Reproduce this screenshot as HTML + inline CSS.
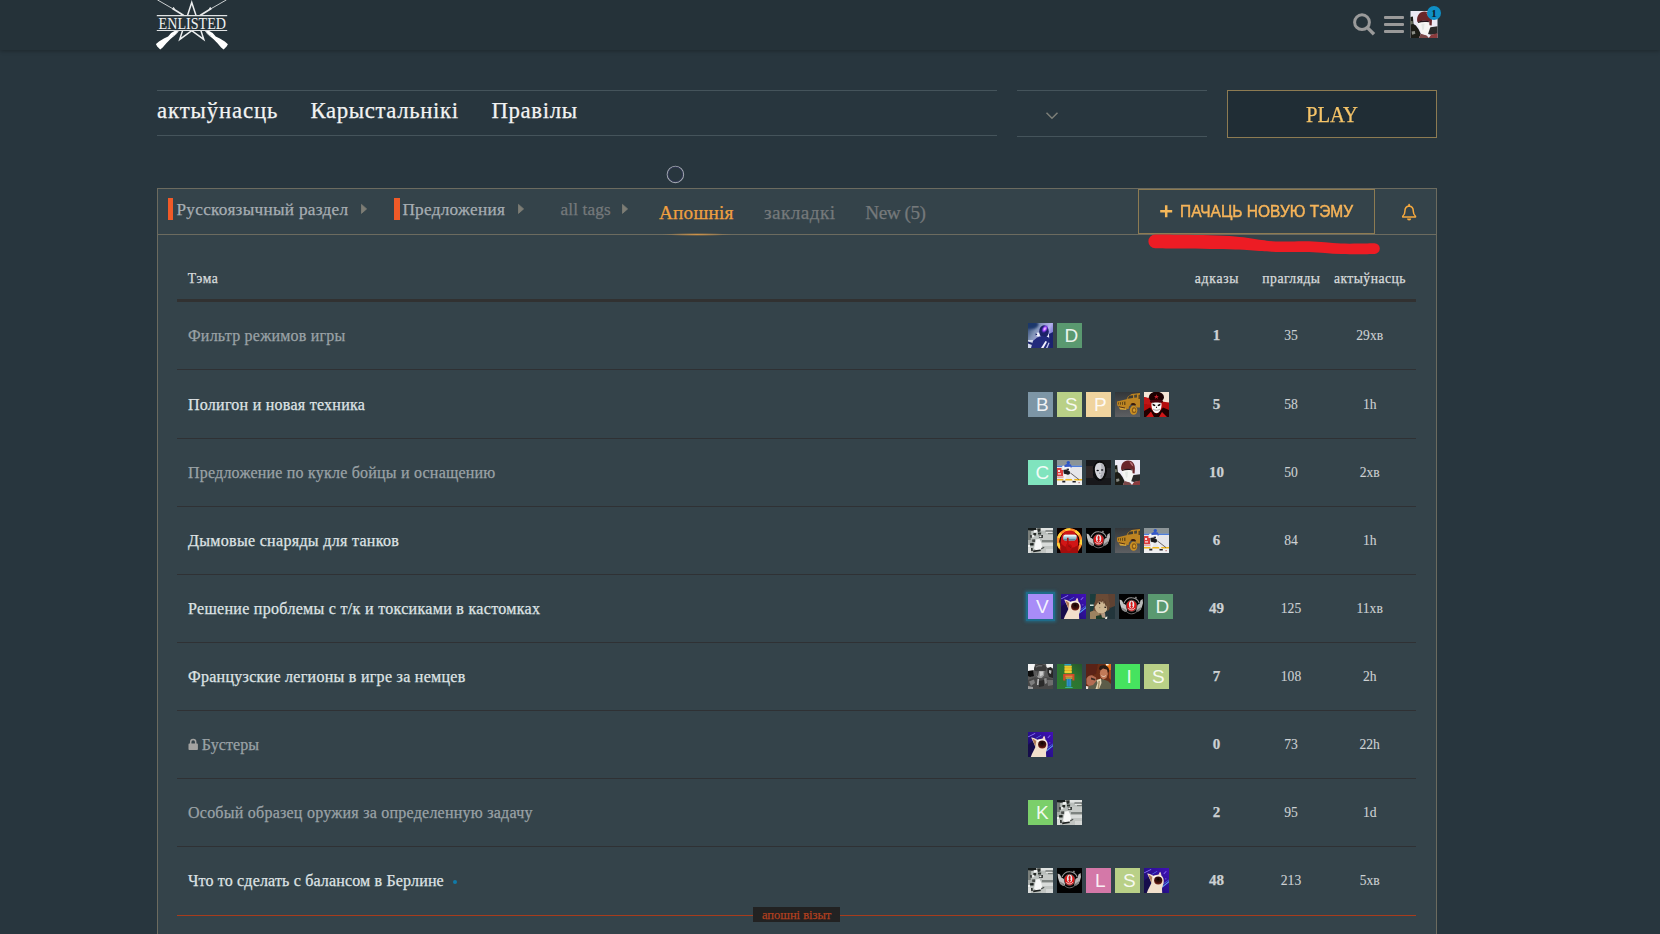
<!DOCTYPE html>
<html lang="be">
<head>
<meta charset="utf-8">
<title>Enlisted forum</title>
<style>
html,body{margin:0;padding:0;}
body{width:1660px;height:934px;overflow:hidden;background:#28363e;position:relative;font-family:"Liberation Serif",serif;}
.abs{position:absolute;}
.t{position:absolute;white-space:nowrap;transform-origin:0 50%;-webkit-text-stroke:0.25px currentColor;}
#hdr{left:0;top:0;width:1660px;height:50px;background:#253239;box-shadow:0 1px 4px rgba(0,0,0,.28);}
.hl{height:1px;background:#45545b;}
#play{left:1227px;top:90px;width:208px;height:46px;border:1px solid #8d7b52;background:#202d35;}
#panel{left:157px;top:188px;width:1278px;height:760px;border:1px solid #6c6b5f;background:#34434a;}
#tbline{left:158px;top:234px;width:1278px;height:1px;background:#6c6b5f;}
#newbtn{left:1138px;top:189px;width:235px;height:43px;border:1px solid #8d7b52;}
.ob{width:5px;height:22px;background:#f05a28;top:198px;}
.sep{left:177px;width:1239px;height:1px;background:#2f3134;}
.av{position:absolute;width:25px;height:25px;overflow:hidden;}
.la{position:absolute;width:25px;height:25px;text-indent:3.5px;overflow:hidden;color:rgba(255,255,255,.9);font:19px/25px "Liberation Sans",sans-serif;text-align:center;}
</style>
</head>
<body>
<div id="hdr" class="abs"></div>
<svg class="abs" style="left:156px;top:0" width="73" height="50" viewBox="0 0 73 50">
<defs><clipPath id="lc"><path d="M0 0 H73 V15 H0 Z M0 31 H73 V50 H0 Z"/></clipPath></defs>
<g clip-path="url(#lc)"><polygon points="35.75,2.40 40.35,16.56 55.25,16.57 43.20,25.32 47.80,39.48 35.75,30.73 23.70,39.48 28.30,25.32 16.25,16.57 31.15,16.56" fill="none" stroke="#eceeef" stroke-width="1.5" stroke-linejoin="miter"/>
<g id="rf"><path d="M1.3 -0.2 L17.6 9.2" stroke="#dfe2e3" stroke-width="0.9" fill="none"/><path d="M16.5 8.6 L27.8 15.4" stroke="#e8eaeb" stroke-width="1.7" fill="none"/><path d="M17.3 7.2 L18.6 9.6" stroke="#e8eaeb" stroke-width="1.1" fill="none"/><path d="M48.8 30.5 L52.3 30.5 L53.7 31.2 L56.7 33 L59.7 36.4 L63.9 38.4 L68.8 41.4 L71.9 44.2 L70.6 46.4 L67.6 49.4 L65.1 47.5 L61.5 43.3 L57.3 39 L53.7 36 L50.1 32.4 Z" fill="#ffffff"/><path d="M49.8 31.2 C51.5 34.5 53.5 36.3 55 36" stroke="#b8bdc0" stroke-width="0.8" fill="none"/></g>
<use href="#rf" transform="translate(71.8,0) scale(-1,1)"/></g>
<path d="M0.8 15.6 H71.2 M0.8 30.5 H71.2" stroke="#dfe2e3" stroke-width="1.1" fill="none"/>
<text x="2.6" y="28.5" font-family="Liberation Serif" font-size="16.3" fill="#f1f2f2" textLength="67.4" lengthAdjust="spacingAndGlyphs">ENLISTED</text>
</svg>
<svg class="abs" style="left:1350px;top:10px" width="30" height="30" viewBox="0 0 30 30"><circle cx="12" cy="12.2" r="7.4" fill="none" stroke="#9a9a9a" stroke-width="3"/><path d="M17.6 17.9 L24 24.3" stroke="#9a9a9a" stroke-width="3.4" stroke-linecap="butt"/></svg>
<div class="abs" style="left:1384px;top:16px;width:20px;height:3px;border-radius:1px;background:#9a9a9a"></div>
<div class="abs" style="left:1384px;top:23px;width:20px;height:3px;border-radius:1px;background:#9a9a9a"></div>
<div class="abs" style="left:1384px;top:30px;width:20px;height:3px;border-radius:1px;background:#9a9a9a"></div>
<svg class="abs" style="left:1410px;top:11px" width="28" height="27" viewBox="0 0 28 27"><use href="#a-helm" /></svg>
<div class="abs" style="left:1427px;top:6px;width:14px;height:14px;border-radius:7px;background:#0f8fc6"></div>
<span class="abs" style="left:1427px;top:6px;width:14px;text-align:center;font:bold 11px/14px 'Liberation Serif',serif;color:#0e1c2a">1</span>

<!-- nav -->
<div class="abs hl" style="left:157px;top:90px;width:840px"></div>
<div class="abs hl" style="left:157px;top:135px;width:840px"></div>
<div class="abs hl" style="left:1017px;top:90px;width:190px"></div>
<div class="abs hl" style="left:1017px;top:136px;width:190px"></div>
<svg class="abs" style="left:1044px;top:110px" width="16" height="12" viewBox="0 0 16 12"><path d="M2.5 2.8 L8 8.2 L13.5 2.8" fill="none" stroke="#7d7f78" stroke-width="1.5"/></svg>
<div id="play" class="abs"></div>
<svg class="abs" style="left:664px;top:163px" width="24" height="24" viewBox="0 0 24 24"><circle cx="11.4" cy="11.4" r="8.2" fill="none" stroke="#a2a8b0" stroke-width="1.1"/><circle cx="11.4" cy="11.4" r="7.3" fill="none" stroke="#35375c" stroke-width="0.9" opacity="0.85"/></svg>
<!-- panel -->
<div id="panel" class="abs"></div>
<div id="tbline" class="abs"></div>
<div id="newbtn" class="abs"></div>
<div class="abs ob" style="left:168px"></div>
<div class="abs ob" style="left:394px;width:6px"></div>
<svg class="abs" style="left:360px;top:203px" width="8" height="12" viewBox="0 0 8 12"><path d="M1.5 1.4 L6.6 5.9 L1.5 10.4 Z" fill="#7d7d75" stroke="#7d7d75" stroke-width="0.8" stroke-linejoin="round"/></svg>
<svg class="abs" style="left:517px;top:203px" width="8" height="12" viewBox="0 0 8 12"><path d="M1.5 1.4 L6.6 5.9 L1.5 10.4 Z" fill="#7d7d75" stroke="#7d7d75" stroke-width="0.8" stroke-linejoin="round"/></svg>
<svg class="abs" style="left:621px;top:203px" width="8" height="12" viewBox="0 0 8 12"><path d="M1.5 1.4 L6.6 5.9 L1.5 10.4 Z" fill="#7d7d75" stroke="#7d7d75" stroke-width="0.8" stroke-linejoin="round"/></svg>
<svg class="abs" style="left:1159px;top:204px" width="15" height="15" viewBox="0 0 15 15"><path d="M7.2 1.3 V13.3 M1.2 7.3 H13.2" fill="none" stroke="#f5b85a" stroke-width="2.5"/></svg>
<svg class="abs" style="left:1400px;top:202.6px" width="18" height="19" viewBox="0 0 18 19"><path d="M9.1 2.9 C6 3.2 4.9 5.6 4.9 8.2 C4.9 10.8 4.1 12.1 2.7 13.3 L2.7 14 H15.5 L15.5 13.3 C14.1 12.1 13.3 10.8 13.3 8.2 C13.3 5.6 12.2 3.2 9.1 2.9 Z" fill="none" stroke="#f6a93e" stroke-width="1.5" stroke-linejoin="round"/><path d="M7 15.4 a2.1 2 0 0 0 4.2 0 Z" fill="#f6a93e"/><path d="M9.1 1.7 V3" stroke="#f6a93e" stroke-width="1.7" stroke-linecap="round"/></svg>
<div class="abs" style="left:662px;top:233px;width:70px;height:3px;background:radial-gradient(ellipse at center, rgba(240,160,64,.75) 0%, rgba(240,160,64,0) 70%)"></div>
<svg class="abs" style="left:1140px;top:230px" width="250" height="30" viewBox="0 0 250 30"><path d="M15.2 4.6 C19.3 4.6 30.9 4.7 40.0 4.8 C49.1 4.9 60.8 5.0 70.0 5.3 C79.2 5.6 88.3 5.9 95.0 6.4 C101.7 6.9 105.5 7.6 110.0 8.2 C114.5 8.8 118.3 9.6 122.0 10.1 C125.7 10.6 127.3 11.0 132.0 11.2 C136.7 11.4 143.8 11.5 150.0 11.5 C156.2 11.5 163.2 11.2 169.0 11.3 C174.8 11.4 179.7 11.9 185.0 12.3 C190.3 12.7 195.5 13.3 201.0 13.5 C206.5 13.7 212.4 13.6 218.0 13.6 C223.6 13.6 231.8 13.3 234.5 13.3 A5.3 5.3 0 0 1 234.5 23.9 L234.5 23.9 C231.8 23.9 223.6 24.2 218.0 24.2 C212.4 24.2 206.5 24.3 201.0 24.1 C195.5 23.9 190.3 23.3 185.0 22.9 C179.7 22.5 174.8 22.0 169.0 21.9 C163.2 21.8 156.2 22.1 150.0 22.1 C143.8 22.1 136.7 22.0 132.0 21.8 C127.3 21.6 125.7 21.4 122.0 21.1 C118.3 20.8 114.5 20.4 110.0 20.2 C105.5 19.9 101.7 19.8 95.0 19.6 C88.3 19.4 79.2 19.3 70.0 19.1 C60.8 18.9 49.1 18.7 40.0 18.6 C30.9 18.4 19.3 18.3 15.2 18.2 A6.8 6.8 0 0 1 15.2 4.6 Z" fill="#ed1c24"/></svg>
<svg class="abs" style="left:188px;top:738px" width="11" height="13" viewBox="0 0 11 13"><path d="M1.3 5.6 H9.1 A0.8 0.8 0 0 1 9.9 6.4 V11.2 A0.8 0.8 0 0 1 9.1 12 H1.3 A0.8 0.8 0 0 1 0.5 11.2 V6.4 A0.8 0.8 0 0 1 1.3 5.6 Z" fill="#a3a3a1"/><path d="M2.7 6 V4 A2.5 2.5 0 0 1 7.7 4 V6" fill="none" stroke="#a3a3a1" stroke-width="1.5"/></svg>
<div class="abs" style="left:453px;top:880px;width:4px;height:4px;border-radius:2px;background:#0f7aa8"></div>

<div class="abs" style="left:177px;top:299px;width:1239px;height:3px;background:#313131"></div>
<div class="abs sep" style="top:369px"></div>
<div class="abs sep" style="top:438px"></div>
<div class="abs sep" style="top:506px"></div>
<div class="abs sep" style="top:574px"></div>
<div class="abs sep" style="top:642px"></div>
<div class="abs sep" style="top:710px"></div>
<div class="abs sep" style="top:778px"></div>
<div class="abs sep" style="top:846px"></div>
<div class="abs" style="left:177px;top:915px;width:1239px;height:1px;background:#a83c1c"></div>
<div class="abs" style="left:753px;top:907px;width:87px;height:15px;background:#222"></div>

<svg width="0" height="0" style="position:absolute">
<defs>
<filter id="b3" x="-10%" y="-10%" width="120%" height="120%"><feGaussianBlur stdDeviation="0.35"/></filter>
<filter id="b6" x="-10%" y="-10%" width="120%" height="120%"><feGaussianBlur stdDeviation="0.7"/></filter>
<filter id="b12" x="-20%" y="-20%" width="140%" height="140%"><feGaussianBlur stdDeviation="1.3"/></filter>
<linearGradient id="gp1" x1="0" y1="0" x2="1" y2="0.6"><stop offset="0" stop-color="#1d3766"/><stop offset="0.35" stop-color="#7f92b4"/><stop offset="0.7" stop-color="#b4b0ee"/><stop offset="1" stop-color="#5a58c8"/></linearGradient>
<radialGradient id="gp2" cx="0.5" cy="0.5" r="0.5"><stop offset="0" stop-color="#ffe8ff"/><stop offset="0.45" stop-color="#b050ff"/><stop offset="1" stop-color="#4a20e0" stop-opacity="0"/></radialGradient>
<linearGradient id="gty" x1="0" y1="1" x2="1" y2="0"><stop offset="0" stop-color="#2f7d32"/><stop offset="0.6" stop-color="#2d7430"/><stop offset="1" stop-color="#25552a"/></linearGradient><linearGradient id="gt1" x1="0" y1="0" x2="0" y2="1"><stop offset="0" stop-color="#33373a"/><stop offset="1" stop-color="#5d5f62"/></linearGradient>
<linearGradient id="gc1" x1="1" y1="0" x2="0" y2="1"><stop offset="0" stop-color="#4210b8"/><stop offset="0.5" stop-color="#2a1090"/><stop offset="1" stop-color="#0e0a3a"/></linearGradient>
<radialGradient id="gc2" cx="0.5" cy="0.35" r="0.65"><stop offset="0" stop-color="#120404"/><stop offset="0.6" stop-color="#3a0c0a"/><stop offset="1" stop-color="#7a2a1c"/></radialGradient>

<symbol id="a-purple" viewBox="0 0 25 25"><rect width="25" height="25" fill="url(#gp1)"/>
<g filter="url(#b6)"><ellipse cx="2.5" cy="1.5" rx="8" ry="4.5" fill="#1c376b" filter="url(#b12)"/><rect x="0" y="17" width="5" height="8" fill="#cfd6ea"/><ellipse cx="10" cy="11.5" rx="2.2" ry="2" fill="#f2f4ff"/><ellipse cx="19.5" cy="13" rx="2" ry="2.8" fill="#eef0ff"/>
<ellipse cx="16" cy="8.5" rx="4.8" ry="6.3" fill="#1a2266"/>
<path d="M3 25 L5 18 L9 14.5 L14 13 L20 14 L24 17.5 L25 25 Z" fill="#232b7c"/><path d="M21 11 L25 9 L25 25 L22 25 Z" fill="#1c2370"/>
<path d="M13 25 L17.5 18 L19 18.8 L15.5 25 Z" fill="#f4f4ff"/><path d="M18 25 L20.5 19.5 L21.5 20 L19.5 25 Z" fill="#c8ccf0"/>
<path d="M0 18.5 L5 20 L4 22 L0 20.5 Z" fill="#1f2870"/><rect x="7.5" y="10.6" width="1.6" height="1.6" fill="#1a2266"/></g>
<ellipse cx="16.8" cy="5.9" rx="3" ry="4.8" fill="url(#gp2)" transform="rotate(32 16.8 5.9)"/></symbol>

<symbol id="a-truck" viewBox="0 0 25 25"><rect width="25" height="25" fill="url(#gt1)"/>
<g filter="url(#b3)"><path d="M2 9.5 L11.5 7.2 L13 4.5 L16.5 2 L25 1 L25 15.5 L21.5 15.5 L20 12.5 L16.5 12 L14 14.5 L13.5 17 L8 16.5 L2.2 13.5 Z" fill="#bd8420"/>
<path d="M12.5 6.8 L14.2 3.8 L18 3.2 L18 6 Z" fill="#3e3a30"/><path d="M19.2 3 L22 2.6 L22 5.5 L19.2 5.8 Z" fill="#4a4434"/><path d="M23.5 3 L25 2.8 L25 7 L23.5 7 Z" fill="#5a4420"/>
<path d="M3 10.5 L10.5 9.5 L10.5 13 L3.2 12.6 Z" fill="#6a4a16"/><path d="M4.5 10.3 V12.8 M6.5 10 V13 M8.5 9.8 V13" stroke="#d8a030" stroke-width="0.7"/>
<path d="M3.5 14.5 L11 16.5 L11.5 18 L5 17.5 Z" fill="#d9a638"/><path d="M4 14.8 L10 16" stroke="#3a1a10" stroke-width="0.8"/>
<path d="M15.5 12.5 C17 10.5 20 10.5 21 13 L19 13.5 Z" fill="#3a1c0c"/>
<ellipse cx="18.6" cy="18.2" rx="3.7" ry="4.6" fill="#c98f24"/><ellipse cx="19" cy="18.2" rx="2.2" ry="2.9" fill="#8a5a14"/><ellipse cx="19.2" cy="18.2" rx="1.2" ry="1.6" fill="#d8a030"/></g></symbol>

<symbol id="a-skull" viewBox="0 0 25 25"><rect width="25" height="25" fill="#b50c0c"/>
<g filter="url(#b3)"><path d="M0 0 H25 V10.5 L14 9 L0 5 Z" fill="#f4e6d6"/><path d="M0 5 L9 7 L9 13 L0 12 Z" fill="#c01414"/>
<path d="M0 25 L0 19 L6 15.5 L8 18 L12.5 22 L17 18 L19 15.5 L25 18 L25 25 Z" fill="#220404"/><path d="M2 25 L7 19.5 L10 25 Z M15 25 L18 20 L23 25 Z" fill="#d01616"/>
<ellipse cx="12.4" cy="5.2" rx="7.6" ry="5.6" fill="#1a0206"/><ellipse cx="12.5" cy="9.4" rx="6.6" ry="1.9" fill="#4a0608"/>
<path d="M12.4 2.2 L13 4 L14.9 4 L13.4 5.1 L14 6.9 L12.4 5.8 L10.8 6.9 L11.4 5.1 L9.9 4 L11.8 4 Z" fill="#c8202a"/>
<path d="M7.6 11 C9 10.2 16 10.2 17.4 11 C18 14 17 17.5 15.5 19.5 C14 21.5 11 21.5 9.5 19.5 C8 17.5 7 14 7.6 11 Z" fill="#fbfbfb"/>
<path d="M8.4 11.6 L11.6 13 L10.8 14.2 L8.8 13.6 Z M16.6 11.6 L13.4 13 L14.2 14.2 L16.2 13.6 Z" fill="#0c0204"/><path d="M12.5 14.2 L13.2 16 L11.8 16 Z" fill="#1a0608"/>
<path d="M9.2 17.2 C11 18.6 14 18.6 15.8 17.2" stroke="#6a5a5a" stroke-width="0.6" fill="none"/></g></symbol>

<symbol id="a-hockey" viewBox="0 0 25 25"><rect width="25" height="25" fill="#e6e6ea"/>
<g filter="url(#b3)"><rect width="25" height="5.8" fill="#8b9497"/><rect y="5.7" width="25" height="1.2" fill="#3f72da"/>
<path d="M0 8 H4.5 V10 H6 V16 H0 Z" fill="#dc3e3e"/><path d="M1 10 H3 V12 H1 Z M1 13.2 H4 V14.4 H1 Z" fill="#f4dede"/><rect x="0" y="16.5" width="6.5" height="1.2" fill="#e88a8a"/>
<rect y="19" width="25" height="1.7" fill="#f0b81e"/><rect y="20.7" width="25" height="4.3" fill="#efeff1"/>
<circle cx="11.3" cy="2.6" r="1.7" fill="#2b55c6"/><path d="M6.8 5.8 L10 3.8 L14 4.4 L14.8 7.5 L12 7.5 L8 8 Z" fill="#3558c8"/>
<path d="M5 6.2 L7.2 5.5 L8 8.5 L6.2 8.6 Z" fill="#f6f6f6"/>
<path d="M8 7 L13.5 6.8 L13 11 L8.5 10.5 Z" fill="#f8f8f8"/><rect x="9.6" y="8.6" width="2.4" height="1.4" fill="#2a2a3a"/>
<path d="M6.3 10 L9 9.5 L12.5 11 L13.5 14.5 L9 14.8 L6.8 13.5 Z" fill="#1c1c20"/>
<path d="M7.6 14 L10 14.5 L8 20.5 L6.2 20.5 Z" fill="#f4f4f6"/><path d="M12 14 L14 13.5 L17.8 20.5 L15.8 20.8 Z" fill="#f0f0f4"/>
<path d="M5.3 20.8 H8.3 V22.4 H5.3 Z M15.5 21 H18.8 V22.4 H15.5 Z" fill="#24242a"/>
<path d="M13.5 13 L22 19.6" stroke="#3a3030" stroke-width="0.7"/><rect x="21.5" y="22.2" width="1.2" height="1" fill="#a04848"/></g></symbol>

<symbol id="a-mask" viewBox="0 0 25 25"><rect width="25" height="25" fill="#18181b"/>
<g filter="url(#b6)"><rect x="0" y="6" width="7" height="12" fill="#2e2826"/><rect x="19" y="8" width="6" height="10" fill="#242225"/><ellipse cx="13.8" cy="11" rx="7" ry="10" fill="#08080a"/></g>
<g filter="url(#b3)"><path d="M13.8 2.8 C17.2 2.8 19 6 18.8 10 C18.6 14 16.5 18.9 14.2 18.9 C11.8 18.9 9.2 14 8.9 10 C8.7 6 10.4 2.8 13.8 2.8 Z" fill="#d4d4d9"/>
<path d="M14.5 3 C17.2 3.4 18.8 6 18.8 10 C18.6 14 16.5 18.9 14.2 18.9 C15.5 14 16 8 14.5 3 Z" fill="#b4b4bc"/>
<ellipse cx="11.7" cy="10.4" rx="1.25" ry="0.75" fill="#101014"/><ellipse cx="16.1" cy="10.1" rx="1.2" ry="0.75" fill="#101014"/>
<path d="M13.6 12 L14.6 14 L13.2 14 Z" fill="#8a8a92"/><rect x="14.6" y="15.6" width="0.9" height="0.7" fill="#55555c"/></g></symbol>

<symbol id="a-helm" viewBox="0 0 25 25"><rect width="25" height="25" fill="#ece9f4"/>
<g filter="url(#b6)"><path d="M0 5.5 L2.2 5 L2.8 12 L5 13.5 L7.5 17 L9.5 21 L8 25 L0 25 Z" fill="#1a1d18"/><path d="M0 9 L2 9.5 L2.2 12 L0 12.5 Z" fill="#6a7060"/><path d="M1 19 L4 18.5 L4.5 21 L1.5 22 Z" fill="#8a8c84"/>
<path d="M17 15.2 L25 14.2 L25 21 L19 22 L15.5 21 Z" fill="#2c2b2a"/><path d="M19 22 L25 20.5 L25 25 L17 25 Z" fill="#8a3a3c"/><path d="M8 25 L9.5 21 L15 22.6 L17 25 Z" fill="#7a4646"/>
<path d="M6.6 9.6 L18.4 9.2 L18.7 14 L15.8 22.6 L10 20.6 L7.4 14 Z" fill="#f6f6f3"/><path d="M10 12 L13 11.5 L12.5 17 L11 18 Z" fill="#e4e8e4"/>
<path d="M6.2 9.6 C5.6 4 8.6 0.4 13 0.4 C17.4 0.4 20 3.6 19.9 8.6 L19.6 13.4 L17.6 13.2 L17.3 9.6 C14 8.6 10 8.8 6.6 10.4 Z" fill="#6b262b"/>
<path d="M14.4 1.4 C16.8 2 18.2 4 18.4 6.6 C16.6 5.4 15.2 3.4 14.4 1.4 Z" fill="#b8727a"/><path d="M7 9.9 C10 8.7 14 8.5 17.2 9.5 L17.2 10.5 C14 9.8 10 10 7 11 Z" fill="#26181a"/></g></symbol>

<symbol id="a-bw" viewBox="0 0 25 25"><rect width="25" height="25" fill="#b9bebb"/>
<g filter="url(#b6)"><rect x="13" y="0" width="12" height="2.6" fill="#e0e3e1"/><rect x="17.5" y="2.5" width="7.5" height="1.1" fill="#4e5350"/><rect x="18" y="3.8" width="6" height="1.3" fill="#e4e6e4"/><rect x="20" y="5.3" width="5" height="0.9" fill="#5a5f5c"/>
<rect x="14" y="6.6" width="11" height="5.4" fill="#c6cac7"/><rect x="14" y="12" width="11" height="2.6" fill="#7d8380"/><rect x="12" y="14.6" width="13" height="3.6" fill="#d9dcda"/><rect x="13" y="18.2" width="12" height="6.8" fill="#c1c5c2"/><rect x="18" y="21" width="7" height="4" fill="#d4d7d5"/>
<rect x="0" y="3" width="3.2" height="9" fill="#7a807c"/><rect x="0" y="12" width="5" height="5" fill="#a8adaa"/>
<path d="M0 0 H8 L8.5 2 L4 2.8 L0 2.4 Z" fill="#181c1a"/><path d="M9 0.5 L12.5 0.3 L12.5 3.6 L10 4 Z" fill="#2a2e2c"/>
<path d="M5.8 2.2 L9 2 L9.2 4.6 L6 4.6 Z" fill="#f4f5f4"/><path d="M5.4 5 L8.2 5 L8 7.6 L5.4 7.4 Z" fill="#262a28"/><path d="M10 4.4 L13.2 4.4 L13 6.6 L10 6.4 Z" fill="#2c302e"/>
<path d="M2 7 L4 7.2 L3.8 10 L2 9.6 Z" fill="#3a3e3c"/><path d="M4 7.2 L6 7 L6.4 9 L4.2 9.4 Z" fill="#eceeec"/>
<path d="M10.8 7 L15 7 L14.8 10 L11 10 Z" fill="#2e3230"/><path d="M11.2 7.4 L13.4 7.4 L13.4 9.2 L11.4 9.2 Z" fill="#f2f3f2"/>
<path d="M4 11.4 L7 11.2 L7.2 14 L4.4 14.2 Z" fill="#4a4e4c"/><path d="M2 15.2 L5.6 15 L5.6 17.6 L2.2 17.6 Z" fill="#1c201e"/><path d="M0 17 L2 17 L2 19.4 L0 19.4 Z" fill="#f0f1f0"/>
<path d="M8 11.5 L11.5 11 L13 14 L14 18.5 L13 21.5 L8.5 22.5 L6 20.5 L7 16 Z" fill="#f7f8f7"/><path d="M0 20 L3 19.6 L3 25 L0 25 Z" fill="#dcdedc"/>
<path d="M3 20 L4.6 20 L4.8 23 L3.2 23 Z" fill="#2a2e2c"/><path d="M5 22.6 L12.5 21.6 L12.8 23 L5.4 24.2 Z" fill="#1e2220"/><path d="M13 20.2 L16 18.8 L16.4 19.8 L13.4 21.4 Z" fill="#4a4e4c"/></g></symbol>

<symbol id="a-among" viewBox="0 0 25 25"><rect width="25" height="25" fill="#0a0000"/>
<g filter="url(#b3)"><circle cx="12.5" cy="13.2" r="11.6" fill="none" stroke="#ff8a2a" stroke-width="2.6"/><circle cx="12.5" cy="13.2" r="11.6" fill="none" stroke="#ffd43a" stroke-width="2.6" stroke-dasharray="5.2 5.2" stroke-dashoffset="2"/>
<path d="M3.8 25 C3 18 3.2 10 5.5 6.5 C7.5 3.2 10 2.4 12.5 2.4 C15.5 2.4 18 3.5 19.8 7 C21.8 11 21.6 18 21 25 Z" fill="#d11313"/>
<path d="M3.8 25 C3.4 21 3.4 18 3.8 15 C7 20 15 22 21.4 17 C21.5 20 21.3 23 21 25 Z" fill="#a30c0c"/>
<path d="M8 6.8 H18 C19.4 6.8 20 8.4 19.6 10 C19.2 11.8 18 12.6 16.5 12.6 H9 C7.4 12.6 6.2 11.8 6.1 10 C6 8.2 6.8 6.8 8 6.8 Z" fill="#a5c9d7"/>
<path d="M8.2 6.8 H17.8 C18.8 6.8 19.4 7.6 19.6 8.6 H6.4 C6.6 7.6 7.2 6.8 8.2 6.8 Z" fill="#eaf5f8"/><path d="M6.3 10.8 H19.3 C18.8 12 17.8 12.6 16.5 12.6 H9 C7.6 12.6 6.6 12 6.3 10.8 Z" fill="#5d8798"/>
<path d="M10 9.8 H11.6 V17 H10 Z" fill="#b30d0d"/><path d="M9.2 16.4 C11 15.4 14.5 16 15 18.5 C15.4 21 13.5 23.5 11.5 23.2 C9.6 23 8.6 19 9.2 16.4 Z" fill="#b80e0e"/><path d="M11 18 C12.5 17.6 13.6 18.6 13.4 20" stroke="#7a0808" stroke-width="0.7" fill="none"/></g></symbol>

<symbol id="a-milan" viewBox="0 0 25 25"><rect width="25" height="25" fill="#020202"/>
<g filter="url(#b3)"><path d="M0.6 5.6 L3 6.6 L4.4 9.6 L7 11 L8.2 17 L5 16.6 L2.2 13.8 L1 9.8 Z" fill="#c4c4c4"/><path d="M2 13 L6 15 L8.5 18.2 L5.6 17.8 L3 16 Z" fill="#8e8e8e"/><path d="M23.6 5 L21.4 6.4 L20.8 9.6 L18.4 11 L17.2 17 L20.2 16.2 L22.8 13.2 L24 9 Z" fill="#b8b8b8"/><path d="M22.6 12.8 L19 15 L16.8 18 L19.6 17.4 L22 15.6 Z" fill="#848484"/>
<path d="M5 9 C7 4.5 11 3.6 13 3.8 C16 4 19 6 20.2 9" stroke="#9a9a9a" stroke-width="1.1" fill="none"/><path d="M16 3.5 L17 2.5 L18 4.5 Z" fill="#c8c8c8"/>
<path d="M6 15.5 C8 19.5 12 20 13 19.8 C16 19.6 18 18 19.2 15.6" stroke="#6e6e6e" stroke-width="1" fill="none"/>
<ellipse cx="12.6" cy="11.8" rx="5.3" ry="5.6" fill="#e01212"/><ellipse cx="12.6" cy="11.8" rx="5.3" ry="5.6" fill="none" stroke="#5a5a5a" stroke-width="0.7"/>
<ellipse cx="12.6" cy="10.6" rx="2.7" ry="3.9" fill="#dfe9ec"/><path d="M12.6 7.2 C13.8 8.4 14 10 13.2 11.2 L14 12.8 L12.6 14.2 L11.2 12.8 L12 11.2 C11.2 10 11.4 8.4 12.6 7.2 Z" fill="#d81414"/>
<path d="M9.4 14.2 C10.8 16.4 14.4 16.4 15.8 14.2" stroke="#e8f0f2" stroke-width="0.9" fill="none"/></g></symbol>

<symbol id="a-cat" viewBox="0 0 25 25"><rect width="25" height="25" fill="url(#gc1)"/>
<g filter="url(#b3)"><path d="M0 4.5 L7 1 L7.3 1.8 L0.3 5.3 Z" fill="#8a70f4"/><path d="M8 6 L13 3 L13.3 3.6 L8.3 6.6 Z" fill="#5a7cf0"/><path d="M19.5 5.5 L22 3 L22.6 3.5 L20.1 6.2 Z" fill="#8a66f0"/>
<path d="M18 18.5 L25 13 L25 14.2 L18.5 19.4 Z" fill="#5aa4f4"/><path d="M18.5 16 L25 11.5 L25 12.2 L18.8 16.6 Z" fill="#4a70e0"/><rect x="21" y="10.5" width="1.4" height="0.8" fill="#7a60e8"/><rect x="2.2" y="15" width="1.6" height="0.8" fill="#5a48c8"/>
<path d="M0 13 L6 8 L8 16 L4 25 L0 25 Z" fill="#16104c"/>
<path d="M3.2 5.4 C5 5.2 7.5 6.4 9.5 7.8 C11.5 7 13.5 6.8 14.6 6.6 L16 3.8 C16.8 4.4 17.2 6 17.4 7.4 C19.4 9 20.2 12 19.6 15 C19 17.6 18.2 19 18 21 L18.2 25 H2.8 C4 21 6.2 18 7.4 15 C6.4 12 4.4 8.4 3.2 5.4 Z" fill="#f2e0cc"/>
<path d="M4.4 6.8 C5.6 7 7 8 8.2 9 L7.4 14.5 C6.4 12 5.2 9.4 4.4 6.8 Z" fill="#b07a58"/><path d="M15.8 4.6 L16.6 7 L15 6.8 Z" fill="#f6c8c0"/>
<path d="M9 9.4 C11 8 14 8 16.2 8.4 C17.4 9 17.8 10 17.8 11" stroke="#fffaf4" stroke-width="1.3" fill="none"/></g>
<ellipse cx="14.2" cy="12.4" rx="4.1" ry="4" fill="url(#gc2)" filter="url(#b3)"/></symbol>

<symbol id="a-anime" viewBox="0 0 25 25"><rect width="25" height="25" fill="#6a4a36"/>
<g filter="url(#b6)"><path d="M0 0 H6 L5 10 L3 17 L0 18 Z" fill="#1f3c3e"/><path d="M0 10.5 H3.6 V12 H0 Z" fill="#cfe0d8"/><path d="M17 14 L25 10 L25 25 L12 25 Z" fill="#22363a"/><path d="M18 0 H25 V12 L20 14 Z" fill="#5e4232"/>
<path d="M0 18 L4 16.5 L9 19 L11 25 L0 25 Z" fill="#9c8260"/><path d="M6 22 L13 20.5 L14 25 L6 25 Z" fill="#1e3a2a"/><path d="M11 19.5 L15 19 L15.5 24 L12 23.5 Z" fill="#b09a84"/><path d="M15.5 23 L17.5 22.5 L17 25 L15 25 Z" fill="#e8e8e0"/>
<ellipse cx="11.2" cy="13.2" rx="6.3" ry="6.4" fill="#cdb692"/>
<path d="M4 11 C5 5 9 2.5 13 3 C18 3.5 21 8 19.5 15 L17.5 17.5 L16.5 12 L14.5 9.5 L13 6.5 L11.5 8.5 L9 6.5 L7 10 L5 12.5 Z" fill="#6b4b35"/></g>
<g filter="url(#b3)"><path d="M12.5 5 L13.5 9.5 M15 7 L16 12 M10 5.5 L8.5 9" stroke="#5a3e2c" stroke-width="0.8"/><ellipse cx="9.6" cy="9.2" rx="0.7" ry="1" fill="#1a120e"/><ellipse cx="15.2" cy="13.2" rx="0.9" ry="0.8" fill="#1a120e"/><rect x="9.4" y="13.2" width="0.8" height="0.9" fill="#7a6248"/></g></symbol>

<symbol id="a-soldier" viewBox="0 0 25 25"><rect width="25" height="25" fill="#585858"/>
<g filter="url(#b3)"><path d="M0 0 H7 L6 6 L0 7 Z" fill="#f4f4f4"/><path d="M18 0 H25 V4 L21 5 L18.5 3 Z" fill="#f2f2f2"/>
<path d="M0 7 L5 6.5 L6 12 L2 13 L0 12 Z" fill="#111"/><path d="M19.5 4 L23 3 L25 6 L25 14 L21 13 L19.5 9 Z" fill="#262626"/><path d="M21 6 L23.5 6.5 L23 10 L21 9 Z" fill="#b8b8b8"/>
<path d="M6 5.5 C6 1.5 9 0 12 0 C15.5 0 18.5 1.5 18.5 5 L17.5 7 L7 7 Z" fill="#3b3b3b"/><path d="M7.5 2.5 C9 1 12 0.6 14.5 1.2 L14 2.6 C12 2.2 9.5 2.6 8 3.8 Z" fill="#6a6a6a"/>
<path d="M8 7 H16.5 L16 11.5 L13.5 14 L10.5 14 L8.5 11.5 Z" fill="#9a9a9a"/><path d="M11.5 7.5 H15 L14.8 11 L12 12.5 Z" fill="#cacaca"/><path d="M8 7 L11 7 L10 12 L8.5 11.5 Z" fill="#4e4e4e"/>
<path d="M0 16 L7 13 L10 14.5 L14 14.5 L18 13 L25 15 L25 25 L0 25 Z" fill="#474747"/>
<path d="M1 17.5 L6 15.5 L7 19 L3 22 Z" fill="#7e7e7e"/><path d="M9.5 15 L11 15 L10.5 21 L9 21 Z" fill="#c4c4c4"/><path d="M16 14.5 L18.5 14 L19 19 L17 20 Z" fill="#8a8a8a"/><path d="M11 17 L16 16 L16 22 L11 23 Z" fill="#2a2a2a"/><path d="M19 16 L25 16 L25 21 L20 22 Z" fill="#6e6e6e"/>
<path d="M0 22 L5 23 L5 25 L0 25 Z" fill="#9a9a9a"/></g></symbol>

<symbol id="a-toy" viewBox="0 0 25 25"><rect width="25" height="25" fill="url(#gty)"/>
<g filter="url(#b3)"><rect x="7.4" y="0" width="6.8" height="1.7" fill="#2ba2c2"/><rect x="7.6" y="1.7" width="7" height="7.6" fill="#e6a820"/>
<rect x="7.6" y="1.9" width="7" height="1.5" fill="#e6cc2e"/><rect x="7.6" y="4.2" width="7" height="1.9" fill="#e6cc2e"/><rect x="7.6" y="7" width="7" height="2" fill="#e8d034"/>
<path d="M6.2 10 H17.4 V16.4 H15.4 V13.2 H8.4 V16.4 H6.2 Z" fill="#d24c2c"/><rect x="8.4" y="11.6" width="7" height="1.6" fill="#e8803a"/><rect x="8.6" y="13.2" width="6.8" height="1.8" fill="#b8a040"/>
<rect x="9.6" y="14.8" width="4.6" height="7.8" fill="#3090c4"/><rect x="11.4" y="15" width="0.8" height="7.4" fill="#1e78b8"/><rect x="8.2" y="23" width="7.4" height="1" fill="#34b29c"/></g></symbol>

<symbol id="a-man" viewBox="0 0 25 25"><rect width="25" height="25" fill="#6a2c16"/>
<g filter="url(#b6)"><path d="M0 0 H12 L10 10 L0 14 Z" fill="#5a2412"/><path d="M19 0 H25 V8 L22.5 5 Z" fill="#e8741c"/><path d="M20 0 H22.6 V1.4 H20 Z" fill="#fff4e0"/><path d="M23 6 L25 6 L25 16 L23 14 Z" fill="#a8481a"/>
<path d="M2 25 L4 19 L10 16 L16 15 L22 17 L25 20 L25 25 Z" fill="#5c5b48"/><path d="M10.5 16 L15 14.5 L15.5 19 L13 25 L9.5 25 L11.5 19 Z" fill="#e2d4b4"/><path d="M12.5 17 L14 17 L13 25 L11.5 25 Z" fill="#a89068"/>
<path d="M13 5 C13 2 16 1 19 1.4 C22 1.8 23.4 4 23 7.5 L21.6 9 L21 5.8 L17 4.6 L14.6 6.8 Z" fill="#2a1a12"/>
<path d="M14.4 6.6 L17 4.6 L21 5.8 L21.8 10 L20.4 14 L17.4 15.4 L14.8 13.4 L13.8 9.8 Z" fill="#c27a58"/><path d="M15.5 11.5 C16.5 12.8 18.5 12.8 19.8 11.6" stroke="#f0e0d0" stroke-width="0.8" fill="none"/>
<path d="M0.5 15 C1 12.5 4 11 6.5 11.4 L10 13.5 L10.4 17 L7 21 L3 22 L0.6 20 Z" fill="#b46c52"/><path d="M5 13.5 L9.4 15 L9 16.4 L5 15.4 Z" fill="#3a2a20"/><path d="M0 22 L2.5 22.5 L2 25 L0 25 Z" fill="#efe8e0"/></g></symbol>
</defs></svg>

<svg class="av" style="left:1028px;top:323px" width="25" height="25"><use href="#a-purple"/></svg>
<div class="la" style="left:1057px;top:323px;background:#5a9970">D</div>
<div class="la" style="left:1028px;top:392px;background:#7d96a6">B</div>
<div class="la" style="left:1057px;top:392px;background:#b9d087">S</div>
<div class="la" style="left:1086px;top:392px;background:#f0d49f">P</div>
<svg class="av" style="left:1115px;top:392px" width="25" height="25"><use href="#a-truck"/></svg>
<svg class="av" style="left:1144px;top:392px" width="25" height="25"><use href="#a-skull"/></svg>
<div class="la" style="left:1028px;top:460px;background:#80e4be">C</div>
<svg class="av" style="left:1057px;top:460px" width="25" height="25"><use href="#a-hockey"/></svg>
<svg class="av" style="left:1086px;top:460px" width="25" height="25"><use href="#a-mask"/></svg>
<svg class="av" style="left:1115px;top:460px" width="25" height="25"><use href="#a-helm"/></svg>
<svg class="av" style="left:1028px;top:528px" width="25" height="25"><use href="#a-bw"/></svg>
<svg class="av" style="left:1057px;top:528px" width="25" height="25"><use href="#a-among"/></svg>
<svg class="av" style="left:1086px;top:528px" width="25" height="25"><use href="#a-milan"/></svg>
<svg class="av" style="left:1115px;top:528px" width="25" height="25"><use href="#a-truck"/></svg>
<svg class="av" style="left:1144px;top:528px" width="25" height="25"><use href="#a-hockey"/></svg>
<div class="abs" style="left:1026px;top:592px;width:25px;height:25px;border:2px solid #1f6c8a;box-shadow:0 0 3px 1px rgba(24,140,180,.5)"></div>
<div class="la" style="left:1028px;top:594px;background:#a88cf8">V</div>
<svg class="av" style="left:1061px;top:594px" width="25" height="25"><use href="#a-cat"/></svg>
<svg class="av" style="left:1090px;top:594px" width="25" height="25"><use href="#a-anime"/></svg>
<svg class="av" style="left:1119px;top:594px" width="25" height="25"><use href="#a-milan"/></svg>
<div class="la" style="left:1148px;top:594px;background:#5a9970">D</div>
<svg class="av" style="left:1028px;top:664px" width="25" height="25"><use href="#a-soldier"/></svg>
<svg class="av" style="left:1057px;top:664px" width="25" height="25"><use href="#a-toy"/></svg>
<svg class="av" style="left:1086px;top:664px" width="25" height="25"><use href="#a-man"/></svg>
<div class="la" style="left:1115px;top:664px;background:#46e35f">I</div>
<div class="la" style="left:1144px;top:664px;background:#b9d087">S</div>
<svg class="av" style="left:1028px;top:732px" width="25" height="25"><use href="#a-cat"/></svg>
<div class="la" style="left:1028px;top:800px;background:#7bcf6a">K</div>
<svg class="av" style="left:1057px;top:800px" width="25" height="25"><use href="#a-bw"/></svg>
<svg class="av" style="left:1028px;top:868px" width="25" height="25"><use href="#a-bw"/></svg>
<svg class="av" style="left:1057px;top:868px" width="25" height="25"><use href="#a-milan"/></svg>
<div class="la" style="left:1086px;top:868px;background:#d478a8">L</div>
<div class="la" style="left:1115px;top:868px;background:#b9d087">S</div>
<svg class="av" style="left:1144px;top:868px" width="25" height="25"><use href="#a-cat"/></svg>
<span class="t" style='left:157.0px;top:100.20px;font:normal 22.8px/1 "Liberation Serif", serif;color:#f2f3f3;letter-spacing:0.877px;'>актыўнасць</span>
<span class="t" style='left:310.6px;top:100.20px;font:normal 22.8px/1 "Liberation Serif", serif;color:#f2f3f3;letter-spacing:0.613px;'>Карыстальнікі</span>
<span class="t" style='left:491.4px;top:100.20px;font:normal 22.8px/1 "Liberation Serif", serif;color:#f2f3f3;letter-spacing:0.636px;'>Правілы</span>
<span class="t" style='left:1306.0px;top:102.53px;font:normal 23.6px/1 "Liberation Serif", serif;color:#f5c469;transform:scaleX(0.8746);'>PLAY</span>
<span class="t" style='left:176.5px;top:200.90px;font:normal 17.2px/1 "Liberation Serif", serif;color:#a7aeb3;letter-spacing:0.293px;'>Русскоязычный раздел</span>
<span class="t" style='left:402.4px;top:200.90px;font:normal 17.2px/1 "Liberation Serif", serif;color:#a7aeb3;letter-spacing:0.292px;'>Предложения</span>
<span class="t" style='left:560.5px;top:200.90px;font:normal 17.2px/1 "Liberation Serif", serif;color:#75797b;letter-spacing:0.161px;'>all tags</span>
<span class="t" style='left:659.0px;top:203.12px;font:normal 19.2px/1 "Liberation Serif", serif;color:#f0a040;letter-spacing:0.246px;'>Апошнія</span>
<span class="t" style='left:764.0px;top:203.12px;font:normal 19.2px/1 "Liberation Serif", serif;color:#75797b;letter-spacing:0.438px;'>закладкі</span>
<span class="t" style='left:865.3px;top:203.12px;font:normal 19.2px/1 "Liberation Serif", serif;color:#75797b;letter-spacing:-0.451px;'>New (5)</span>
<span class="t" style='left:1180.4px;top:202.71px;font:normal 17px/1 "Liberation Sans", sans-serif;color:#f6b459;-webkit-text-stroke-width:0.5px;transform:scaleX(0.9111);'>ПАЧАЦЬ НОВУЮ ТЭМУ</span>
<span class="t" style='left:187.7px;top:271.61px;font:normal 13.6px/1 "Liberation Serif", serif;color:#d9dcdd;letter-spacing:0.479px;'>Тэма</span>
<span class="t" style='left:1194.7px;top:271.61px;font:normal 13.6px/1 "Liberation Serif", serif;color:#d9dcdd;letter-spacing:0.782px;'>адказы</span>
<span class="t" style='left:1262.3px;top:271.61px;font:normal 13.6px/1 "Liberation Serif", serif;color:#d9dcdd;letter-spacing:0.517px;'>прагляды</span>
<span class="t" style='left:1333.9px;top:271.61px;font:normal 13.6px/1 "Liberation Serif", serif;color:#d9dcdd;letter-spacing:0.483px;'>актыўнасць</span>
<span class="t" style='left:188.0px;top:327.60px;font:normal 16px/1 "Liberation Serif", serif;color:#9aa2a6;letter-spacing:0.220px;'>Фильтр режимов игры</span>
<span class="t" style='left:1216.5px;top:327.64px;font:bold 15px/1 "Liberation Serif", serif;color:#cdd1d3;transform:translateX(-50%);'>1</span>
<span class="t" style='left:1291.0px;top:328.61px;font:normal 13.6px/1 "Liberation Serif", serif;color:#cdd1d3;-webkit-text-stroke-width:0.1px;transform:translateX(-50%);'>35</span>
<span class="t" style='left:1369.7px;top:328.61px;font:normal 13.6px/1 "Liberation Serif", serif;color:#cdd1d3;-webkit-text-stroke-width:0.1px;transform:translateX(-50%);'>29хв</span>
<span class="t" style='left:188.0px;top:396.60px;font:normal 16px/1 "Liberation Serif", serif;color:#dfe3e5;letter-spacing:0.260px;'>Полигон и новая техника</span>
<span class="t" style='left:1216.5px;top:396.64px;font:bold 15px/1 "Liberation Serif", serif;color:#cdd1d3;transform:translateX(-50%);'>5</span>
<span class="t" style='left:1291.0px;top:397.61px;font:normal 13.6px/1 "Liberation Serif", serif;color:#cdd1d3;-webkit-text-stroke-width:0.1px;transform:translateX(-50%);'>58</span>
<span class="t" style='left:1369.7px;top:397.61px;font:normal 13.6px/1 "Liberation Serif", serif;color:#cdd1d3;-webkit-text-stroke-width:0.1px;transform:translateX(-50%);'>1h</span>
<span class="t" style='left:188.0px;top:464.60px;font:normal 16px/1 "Liberation Serif", serif;color:#9aa2a6;letter-spacing:0.209px;'>Предложение по кукле бойцы и оснащению</span>
<span class="t" style='left:1216.5px;top:464.64px;font:bold 15px/1 "Liberation Serif", serif;color:#cdd1d3;transform:translateX(-50%);'>10</span>
<span class="t" style='left:1291.0px;top:465.61px;font:normal 13.6px/1 "Liberation Serif", serif;color:#cdd1d3;-webkit-text-stroke-width:0.1px;transform:translateX(-50%);'>50</span>
<span class="t" style='left:1369.7px;top:465.61px;font:normal 13.6px/1 "Liberation Serif", serif;color:#cdd1d3;-webkit-text-stroke-width:0.1px;transform:translateX(-50%);'>2хв</span>
<span class="t" style='left:188.0px;top:532.60px;font:normal 16px/1 "Liberation Serif", serif;color:#dfe3e5;letter-spacing:0.313px;'>Дымовые снаряды для танков</span>
<span class="t" style='left:1216.5px;top:532.64px;font:bold 15px/1 "Liberation Serif", serif;color:#cdd1d3;transform:translateX(-50%);'>6</span>
<span class="t" style='left:1291.0px;top:533.61px;font:normal 13.6px/1 "Liberation Serif", serif;color:#cdd1d3;-webkit-text-stroke-width:0.1px;transform:translateX(-50%);'>84</span>
<span class="t" style='left:1369.7px;top:533.61px;font:normal 13.6px/1 "Liberation Serif", serif;color:#cdd1d3;-webkit-text-stroke-width:0.1px;transform:translateX(-50%);'>1h</span>
<span class="t" style='left:188.0px;top:600.60px;font:normal 16px/1 "Liberation Serif", serif;color:#dfe3e5;letter-spacing:0.303px;'>Решение проблемы с т/к и токсиками в кастомках</span>
<span class="t" style='left:1216.5px;top:600.64px;font:bold 15px/1 "Liberation Serif", serif;color:#cdd1d3;transform:translateX(-50%);'>49</span>
<span class="t" style='left:1291.0px;top:601.61px;font:normal 13.6px/1 "Liberation Serif", serif;color:#cdd1d3;-webkit-text-stroke-width:0.1px;transform:translateX(-50%);'>125</span>
<span class="t" style='left:1369.7px;top:601.61px;font:normal 13.6px/1 "Liberation Serif", serif;color:#cdd1d3;-webkit-text-stroke-width:0.1px;transform:translateX(-50%);'>11хв</span>
<span class="t" style='left:188.0px;top:668.60px;font:normal 16px/1 "Liberation Serif", serif;color:#dfe3e5;letter-spacing:0.278px;'>Французские легионы в игре за немцев</span>
<span class="t" style='left:1216.5px;top:668.64px;font:bold 15px/1 "Liberation Serif", serif;color:#cdd1d3;transform:translateX(-50%);'>7</span>
<span class="t" style='left:1291.0px;top:669.61px;font:normal 13.6px/1 "Liberation Serif", serif;color:#cdd1d3;-webkit-text-stroke-width:0.1px;transform:translateX(-50%);'>108</span>
<span class="t" style='left:1369.7px;top:669.61px;font:normal 13.6px/1 "Liberation Serif", serif;color:#cdd1d3;-webkit-text-stroke-width:0.1px;transform:translateX(-50%);'>2h</span>
<span class="t" style='left:201.8px;top:736.60px;font:normal 16px/1 "Liberation Serif", serif;color:#9aa2a6;letter-spacing:0.078px;'>Бустеры</span>
<span class="t" style='left:1216.5px;top:736.64px;font:bold 15px/1 "Liberation Serif", serif;color:#cdd1d3;transform:translateX(-50%);'>0</span>
<span class="t" style='left:1291.0px;top:737.61px;font:normal 13.6px/1 "Liberation Serif", serif;color:#cdd1d3;-webkit-text-stroke-width:0.1px;transform:translateX(-50%);'>73</span>
<span class="t" style='left:1369.7px;top:737.61px;font:normal 13.6px/1 "Liberation Serif", serif;color:#cdd1d3;-webkit-text-stroke-width:0.1px;transform:translateX(-50%);'>22h</span>
<span class="t" style='left:188.0px;top:804.60px;font:normal 16px/1 "Liberation Serif", serif;color:#9aa2a6;letter-spacing:0.238px;'>Особый образец оружия за определенную задачу</span>
<span class="t" style='left:1216.5px;top:804.64px;font:bold 15px/1 "Liberation Serif", serif;color:#cdd1d3;transform:translateX(-50%);'>2</span>
<span class="t" style='left:1291.0px;top:805.61px;font:normal 13.6px/1 "Liberation Serif", serif;color:#cdd1d3;-webkit-text-stroke-width:0.1px;transform:translateX(-50%);'>95</span>
<span class="t" style='left:1369.7px;top:805.61px;font:normal 13.6px/1 "Liberation Serif", serif;color:#cdd1d3;-webkit-text-stroke-width:0.1px;transform:translateX(-50%);'>1d</span>
<span class="t" style='left:188.0px;top:872.60px;font:normal 16px/1 "Liberation Serif", serif;color:#dfe3e5;letter-spacing:0.163px;'>Что то сделать с балансом в Берлине</span>
<span class="t" style='left:1216.5px;top:872.64px;font:bold 15px/1 "Liberation Serif", serif;color:#cdd1d3;transform:translateX(-50%);'>48</span>
<span class="t" style='left:1291.0px;top:873.61px;font:normal 13.6px/1 "Liberation Serif", serif;color:#cdd1d3;-webkit-text-stroke-width:0.1px;transform:translateX(-50%);'>213</span>
<span class="t" style='left:1369.7px;top:873.61px;font:normal 13.6px/1 "Liberation Serif", serif;color:#cdd1d3;-webkit-text-stroke-width:0.1px;transform:translateX(-50%);'>5хв</span>
<span class="t" style='left:762.0px;top:908.53px;font:normal 12.5px/1 "Liberation Serif", serif;color:#b3401f;letter-spacing:-0.011px;'>апошні візыт</span>
</body>
</html>
